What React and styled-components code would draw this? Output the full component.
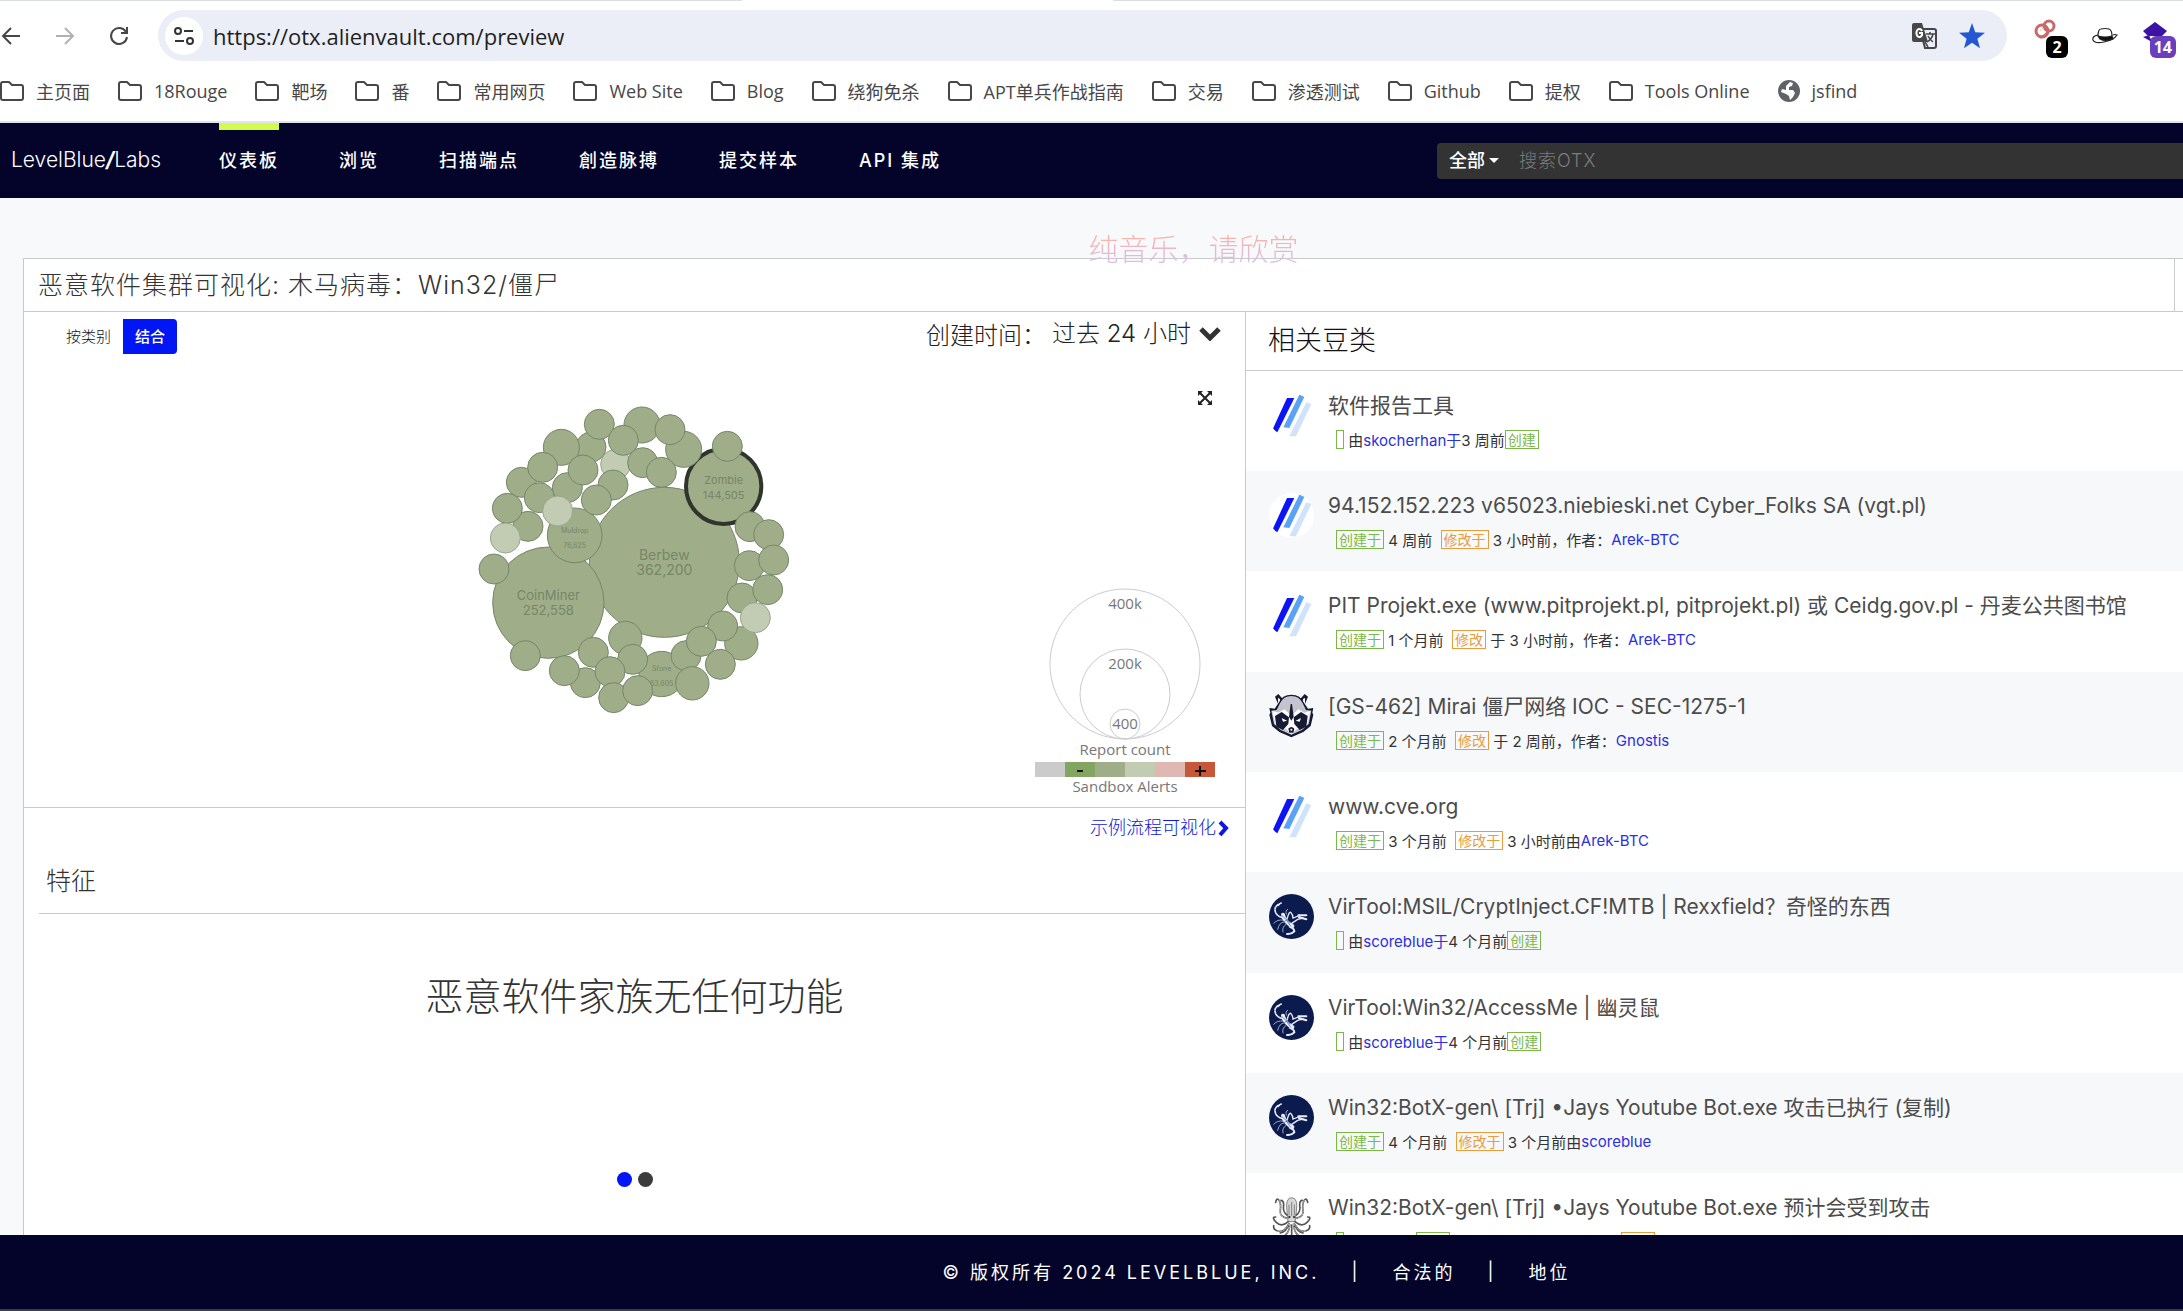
import React from "react";
import styled, { createGlobalStyle, css } from "styled-components";

const ui = `"Open Sans", "Noto Sans CJK SC", sans-serif`;
const site = `Inter, "Noto Sans CJK SC", sans-serif`;
const line = "#c9cacc";

const GlobalStyle = createGlobalStyle`
  *, *::before, *::after { box-sizing: border-box; }
  body { margin: 0; background: #f8f9fb; }
  button, input, select { font: inherit; letter-spacing: inherit; color: inherit; margin: 0; }
  h1, h2, h3, p, ul { margin: 0; padding: 0; font-weight: inherit; }
  ul { list-style: none; }
  a { color: inherit; text-decoration: none; }
`;

const Page = styled.div`
  display: flex;
  flex-direction: column;
  height: 100vh;
  overflow: hidden;
  font-family: ${site};
  font-weight: 300;
  color: #333;
`;

/* ---------- browser chrome ---------- */
const Browser = styled.header`
  flex: none;
  background: #fff;
  border-bottom: 2px solid #dfe4f1;
  font-family: ${ui};
  font-weight: 400;
`;
const TabEdge = styled.div`
  height: 1px;
  background: linear-gradient(to right, #dadde2 34%, #fff 34%, #fff 51%, #dadde2 51%);
`;
const Toolbar = styled.div`
  display: flex;
  align-items: center;
  padding: 9px 7px 0 0;
`;
const IconButton = styled.button`
  display: flex;
  align-items: center;
  justify-content: center;
  border: 0;
  padding: 0;
  background: none;
  color: ${(p) => p.$color || "#474747"};
  svg { display: block; }
`;
const NavButtons = styled.div`
  display: flex;
  gap: 32px;
  width: 158px;
`;
const AddressBar = styled.div`
  display: flex;
  align-items: center;
  flex: 1;
  height: 51px;
  padding: 0 22px 0 7px;
  border-radius: 26px;
  background: #ebeef6;
`;
const SiteInfo = styled(IconButton)`
  width: 38px;
  height: 38px;
  border-radius: 50%;
  background: #fff;
`;
const Url = styled.input`
  flex: 1;
  border: 0;
  outline: 0;
  background: none;
  padding: 0 10px;
  font-size: 22px;
  color: #1f1f1f;
`;
const BarIcons = styled.div`
  display: flex;
  gap: 22px;
`;
const Extensions = styled.div`
  display: flex;
  align-items: center;
  gap: 20px;
  padding-left: 27px;
`;
const Extension = styled(IconButton)`
  position: relative;
  width: 34px;
  height: 44px;
`;
const Badge = styled.span`
  position: absolute;
  right: 0;
  bottom: 0;
  min-width: 22px;
  height: 22px;
  padding: 0 4px;
  border-radius: 6px;
  background: ${(p) => p.$color};
  color: #fff;
  font-size: 16px;
  font-weight: 700;
  line-height: 22px;
`;
const Bookmarks = styled.nav`
  display: flex;
  align-items: center;
  gap: 28px;
  height: 60px;
  white-space: nowrap;
  font-size: 18px;
  color: #474747;
`;
const Bookmark = styled.a`
  display: flex;
  align-items: center;
  gap: 12px;
  svg { display: block; }
`;

/* ---------- site header ---------- */
const SiteBar = styled.div`
  flex: none;
  display: flex;
  align-items: center;
  height: 75px;
  padding-left: 11px;
  background: #04042b;
  color: #fff;
`;
const Brand = styled.a`
  width: 208px;
  padding-bottom: 3px;
  font-size: 21px;
  i { font-weight: 700; }
`;
const Menu = styled.nav`
  display: flex;
  align-self: stretch;
  gap: 60px;
  flex: 1;
  font-size: 18px;
  font-weight: 500;
  letter-spacing: 2px;
`;
const MenuLink = styled.a`
  display: flex;
  align-items: center;
  border-top: 7px solid ${(p) => (p.$active ? "#d3fb4e" : "transparent")};
  border-bottom: 10px solid transparent;
`;
const Search = styled.form`
  display: flex;
  align-items: center;
  width: 746px;
  height: 36px;
  padding-left: 12px;
  border-radius: 4px 0 0 4px;
  background: #333;
  font-size: 18px;
`;
const Scope = styled.select`
  appearance: none;
  border: 0;
  padding: 0;
  background: none;
  color: #fff;
  font-weight: 500;
  option { color: #333; }
`;
const Caret = styled.span`
  margin: 0 18px 0 4px;
  border: 5px solid transparent;
  border-top-color: #fff;
  border-bottom: 0;
`;
const SearchInput = styled.input`
  flex: 1;
  border: 0;
  outline: 0;
  background: none;
  letter-spacing: 1px;
  &::placeholder { color: #7d7d7d; }
`;

/* ---------- main content ---------- */
const Main = styled.main`
  flex: 1;
  min-height: 0;
  display: flex;
  flex-direction: column;
  position: relative;
  padding: 60px 0 0 23px;
  overflow: hidden;
`;
const Lyric = styled.p`
  position: absolute;
  inset: 29px 0 auto 0;
  width: fit-content;
  margin: 0 auto;
  padding-left: 204px;
  font-size: 30px;
  line-height: 44px;
  color: transparent;
  background: linear-gradient(#f8b4a6 20%, #d6bdf0 85%);
  background-clip: text;
`;
const TitleRow = styled.div`
  flex: none;
  display: flex;
  border: 1px solid ${line};
  border-right: 0;
  background: #fff;
`;
const Title = styled.h1`
  flex: 1;
  margin-right: 8px;
  padding: 0 14px;
  border-right: 1px solid ${line};
  font-size: 25px;
  line-height: 52px;
  letter-spacing: 1px;
`;
const Columns = styled.div`
  flex: 1;
  min-height: 0;
  display: grid;
  grid-template-columns: minmax(0, 1222fr) minmax(0, 938fr);
`;
const Left = styled.section`
  border-left: 1px solid ${line};
  background: #fff;
`;
const Viz = styled.div`
  display: grid;
  grid-template-columns: 1fr auto 1fr;
  grid-template-rows: 42px auto;
  height: 496px;
  border-bottom: 1px solid ${line};
`;
const Modes = styled.div`
  grid-column: 1;
  display: flex;
  align-items: center;
  padding: 7px 0 0 30px;
`;
const Mode = styled.button`
  height: 35px;
  border: 0;
  padding: 0 12px 2px;
  border-radius: 0 4px 4px 0;
  font-size: 15px;
  background: ${(p) => (p.$on ? "#0016f5" : "transparent")};
  color: ${(p) => (p.$on ? "#fff" : "#111")};
  font-weight: ${(p) => (p.$on ? 500 : 300)};
`;
const Period = styled.div`
  grid-column: 2 / 4;
  justify-self: end;
  display: flex;
  align-items: center;
  padding-right: 24px;
  font-size: 24px;
  color: #222;
  svg { display: block; margin-left: 8px; }
`;
const PeriodSelect = styled.select`
  appearance: none;
  border: 0;
  padding: 0;
  margin-left: 6px;
  background: none;
`;
const ClusterArea = styled.div`
  grid-column: 2;
  padding-top: 36px;
  svg { display: block; }
`;
const Side = styled.div`
  grid-column: 3;
  display: flex;
  flex-direction: column;
  align-items: flex-end;
  justify-content: space-between;
  padding: 34px 30px 12px 0;
`;
const ExpandButton = styled(IconButton)`
  width: 20px;
  height: 20px;
`;
const FlowRow = styled.div`
  display: flex;
  justify-content: flex-end;
  padding: 1px 16px 0;
`;
const FlowLink = styled.a`
  display: flex;
  align-items: center;
  gap: 2px;
  font-size: 18px;
  line-height: 38px;
  color: #0f16e0;
`;
const FeatureHead = styled.h2`
  margin-left: 15px;
  padding: 18px 7px 15px;
  border-bottom: 1px solid ${line};
  font-size: 25px;
  line-height: 33px;
`;
const Empty = styled.p`
  padding: 55px 0 149px;
  text-align: center;
  font-size: 38px;
  line-height: 54px;
`;
const Dots = styled.div`
  display: flex;
  justify-content: center;
  gap: 6px;
`;
const Dot = styled.button`
  width: 15px;
  height: 15px;
  border: 0;
  padding: 0;
  border-radius: 50%;
  background: ${(p) => (p.$on ? "#0016f5" : "#3c3c3c")};
`;

/* ---------- pulses ---------- */
const Right = styled.section`
  min-height: 0;
  overflow: hidden;
  border-left: 1px solid ${line};
  background: #fff;
`;
const PulseHead = styled.h2`
  padding: 0 22px;
  border-bottom: 1px solid ${line};
  font-size: 27px;
  line-height: 58px;
  color: #111;
`;
const PulseRow = styled.li`
  display: flex;
  gap: 14px;
  padding: 22px 23px 23px;
  white-space: nowrap;
  background: ${(p) => (p.$striped ? "#f7f8fa" : "#fff")};
  &:nth-child(3n) { padding-bottom: 24px; }
`;
const Avatar = styled.span`
  flex: none;
  width: 45px;
  height: 45px;
  border-radius: 50%;
  background: #fff;
  overflow: hidden;
  ${(p) => p.$clear && css`background: none; border-radius: 0;`}
  svg { display: block; width: 100%; height: 100%; }
`;
const PulseTitle = styled.h3`
  font-size: 21px;
  font-weight: 400;
  line-height: 26px;
  color: #4c4c4c;
`;
const Meta = styled.p`
  display: flex;
  align-items: center;
  margin-top: 11px;
  padding-left: 8px;
  height: 18px;
  font-size: 15px;
  font-weight: 400;
`;
const Plain = styled.span`
  white-space: pre;
`;
const User = styled.a`
  color: #2a2fe0;
`;
const Tag = styled.span`
  height: 19px;
  min-width: 8px;
  padding: 0 ${(p) => (p.$empty ? 3 : 2)}px;
  border: 1px solid ${(p) => (p.$warm ? "#e89c3e" : "#7cb849")};
  color: ${(p) => (p.$warm ? "#e89c3e" : "#7cb849")};
  font-size: 14px;
  line-height: 17px;
`;

/* ---------- footer ---------- */
const Footer = styled.footer`
  flex: none;
  display: flex;
  align-items: center;
  justify-content: center;
  gap: 32px;
  height: 76px;
  padding: 0 0 2px 330px;
  border-bottom: 2px solid #3d3c46;
  background: #04042b;
  color: #fff;
  font-size: 18px;
  font-weight: 400;
  letter-spacing: 3px;
`;

/* ---------- icons ---------- */
const Arrow = ({ back }) => (
  <svg width="22" height="22" viewBox="0 0 22 22" fill="none" stroke="currentColor" strokeWidth="2">
    {back ? <path d="M20 11H3M11 3L3 11l8 8" /> : <path d="M2 11h17M11 3l8 8-8 8" />}
  </svg>
);
const Reload = () => (
  <svg width="22" height="22" viewBox="0 0 22 22" fill="none" stroke="currentColor" strokeWidth="2">
    <path d="M18 7a8 8 0 1 0 1 5" />
    <path d="M19 2v6h-6" />
  </svg>
);
const Tune = () => (
  <svg width="22" height="20" viewBox="0 0 22 20" fill="none" stroke="#333" strokeWidth="2">
    <circle cx="5" cy="5" r="3" />
    <path d="M11 5h9M2 15h9" />
    <circle cx="17" cy="15" r="3" />
  </svg>
);
const Folder = () => (
  <svg width="24" height="20" viewBox="0 0 24 20" fill="none" stroke="currentColor" strokeWidth="2" strokeLinejoin="round">
    <path d="M1 3q0-2 2-2h6l3 3h9q2 0 2 2v11q0 2-2 2H3q-2 0-2-2z" />
  </svg>
);
const Globe = () => (
  <svg width="22" height="22" viewBox="0 0 22 22">
    <circle cx="11" cy="11" r="11" fill="#5f6368" />
    <path d="M12 2l3 1-1 3-3 1v3h4l2 3-2 4-3 3-1-4-3-2-5-2 1-3 4 1V6z" fill="#fff" />
  </svg>
);
const Translate = () => (
  <svg width="26" height="26" viewBox="0 0 26 26">
    <path d="M9 6h14q2 0 2 2v15q0 2-2 2h-9z" fill="#ebeef6" stroke="#474747" strokeWidth="2" />
    <path d="M3 0h8l6 19H3q-2 0-2-2V2q0-2 2-2z" fill="#474747" />
    <path d="M11 8a3 4 0 1 0 0 4V10H8" fill="none" stroke="#fff" strokeWidth="2" />
    <path d="M15 11h9M19 9v2M22 11q-1 5-6 8M17 13q2 4 5 6M14 19l3 5" fill="none" stroke="#474747" strokeWidth="1.5" />
  </svg>
);
const Star = () => (
  <svg width="26" height="26" viewBox="0 0 24 24" fill="#2458d3">
    <path d="M12 0l3 8.600 9 .400-7 5.600 2.400 8.700L12 18.300l-7.400 5L7 14.600 0 9l9-.400z" />
  </svg>
);
const Rings = () => (
  <svg width="34" height="44" viewBox="0 0 34 44" fill="none">
    <g stroke="#c8696a" strokeWidth="3">
      <circle cx="8" cy="17" r="6" />
      <circle cx="15" cy="12" r="5" />
      <path d="M6 23q5 0 8-5" />
    </g>
    <path d="M6 17a3 3 0 0 1 4-2" stroke="#eebcbc" />
  </svg>
);
const Hat = () => (
  <svg width="26" height="18" viewBox="0 0 26 18" fill="none" stroke="#222" strokeWidth="1.2">
    <path d="M6 9Q6 2 9 2q4-1 8 0 3 1 3 7" fill="#fff" />
    <path d="M6 9q7 2 14 0l1 3q-8 3-13 0z" fill="#111" />
    <path d="M6 8q-6 1-5 5 2 4 11 2 10-2 13-7-2-1-4 0" />
  </svg>
);
const Gem = () => (
  <svg width="34" height="44" viewBox="0 0 34 44" fill="#3e12a5">
    <path d="M13 8l12 9-5 5H6l-5-5z" />
    <path d="M1 23l6-2 3 7z" />
  </svg>
);
const ChevronDown = () => (
  <svg width="22" height="15" viewBox="0 0 22 15" fill="none" stroke="#333" strokeWidth="5">
    <path d="M2 3l9 9 9-9" />
  </svg>
);
const ChevronRight = () => (
  <svg width="11" height="17" viewBox="0 0 11 17" fill="none" stroke="currentColor" strokeWidth="4">
    <path d="M2 2l6 6-6 7" />
  </svg>
);
const Expand = () => (
  <svg width="14" height="14" viewBox="0 0 14 14">
    <path d="M2 2l10 10M12 2L2 12" stroke="#222" strokeWidth="2" />
    <path d="M0 0h5L0 5zM14 0v5L9 0zM0 14V9l5 5zM14 14H9l5-5z" fill="#222" />
  </svg>
);

const BarsLogo = () => (
  <svg viewBox="0 0 135 135">
    <path d="M54 15h22L25 118 11 109z" fill="#0a14f5" />
    <path d="M91 5l16 5-46 95-18-2z" fill="#5aa2f5" />
    <path d="M112 28l15 5-46 97H61z" fill="#cfe4fb" />
  </svg>
);
const Raccoon = () => (
  <svg viewBox="0 0 135 135">
    <path d="M18 8l10-8 14 16-14 16zM117 8l-10-8-14 16 14 16z" fill="#171a33" />
    <path d="M27 12l5 2 4 12-9 8zM108 12l-5 2-4 12 9 8z" fill="#fff" />
    <path d="M67 2q28 0 38 24l12 18 16-2-3 14 3 6-8 34-22 18-36 16-36-16-22-18-8-34 3-6-3-14 16 2 12-18Q39 2 67 2z" fill="#171a33" />
    <path d="M67 6q24 0 34 22l10 20 16 2-8 40-20 18-32 14-32-14-20-18-8-40 16-2 10-20Q43 6 67 6z" fill="#c3c4cd" />
    <path d="M10 50l18 6 18-10 16 14 5-32 5 32 16-14 18 10 18-6-8 40-20 14-14 2-15 16-15-16-14-2-20-14z" fill="#fff" />
    <path d="M18 66l20-12 22 16-2 20-16 18-20-10zM116 66l-20-12-22 16 2 20 16 18 20-10z" fill="#171a33" />
    <path d="M38 72l16 8-12 3zM96 72l-16 8 12 3z" fill="#fff" />
    <path d="M65 30h4l5 38-7 12-7-12z" fill="#171a33" />
    <path d="M58 104q9-10 18 0l-3 12h-12zM60 122h14l-7 6z" fill="#171a33" />
    <circle cx="67" cy="107" r="3" fill="#fff" />
  </svg>
);
const Scorpion = () => (
  <svg viewBox="0 0 135 135">
    <rect width="135" height="135" fill="#0b1b4d" />
    <g fill="none" stroke="#e9edf8" strokeLinecap="round">
      <path d="M36 28Q12 36 20 56q4 10 22 16" strokeWidth="5" strokeDasharray="6 4" />
      <path d="M28 36l8-10" strokeWidth="3" />
      <path d="M42 62q4 22 28 34" strokeWidth="12" />
      <path d="M54 76q6-26 12-20t6 16l16-6" strokeWidth="4" />
      <path d="M68 88l18-12 16-4" strokeWidth="4" />
      <path d="M88 64l24 0M90 70l22 6" strokeWidth="6" />
      <path d="M62 98q14 6 14 14-10 10-22 8" strokeWidth="6" />
      <path d="M42 78q-18-2-28 10M44 84q-14 2-18 22M50 92q-12 8-8 22M52 60q-4-10 4-14" strokeWidth="2" />
    </g>
    <path d="M38 64l26 24M52 78l14 20M58 74l-14 10" stroke="#4a5c94" strokeWidth="2" />
  </svg>
);
const Octopus = () => (
  <svg viewBox="0 0 135 135" fill="none" stroke="#555" strokeLinecap="round">
    <path d="M54 50q-6-42 14-42t14 42l-4 30H58z" fill="#d8d8d8" strokeWidth="2" />
    <g strokeWidth="5">
      <path d="M56 70Q30 66 34 44q3-18-4-28t-10 6M80 70q26-4 22-26-3-18 4-28t10 6" />
      <path d="M54 60Q40 50 44 30q0-14-8-14M82 60q14-10 10-30 0-14 8-14" />
      <path d="M58 80q-20 18-36 2T20 66M78 80q20 18 36 2t2-16" />
      <path d="M60 86q-14 28-34 22-14-4-12-16M76 86q14 28 34 22 14-4 12-16" />
      <path d="M62 88q0 28-22 38M74 88q0 28 22 38M68 90v40M58 90q-6 20-24 24M78 90q6 20 24 24" />
    </g>
    <g stroke="#eee" strokeWidth="2" strokeDasharray="4 4">
      <path d="M56 70Q30 66 34 44q3-18-4-28M80 70q26-4 22-26-3-18 4-28" />
      <path d="M60 86q-14 28-34 22M76 86q14 28 34 22M62 88q0 28-22 38M74 88q0 28 22 38" />
    </g>
    <path d="M60 30v30M68 22v40M76 30v30" strokeWidth="2" />
    <circle cx="61" cy="66" r="3" fill="#222" />
    <circle cx="75" cy="66" r="3" fill="#222" />
  </svg>
);

/* ---------- charts ---------- */
// [cx, cy, r, light]
const small = [
  [393, 171, 45], [184, 277, 45], [467, 223, 45, 1], [322, 293, 45], [238, 323, 45], [204, 409, 45],
  [304, 172, 54], [546, 105, 54], [671, 178, 54], [248, 232, 45], [418, 103, 45], [369, 240, 45],
  [490, 151, 45], [630, 119, 45], [548, 218, 45], [604, 247, 45], [459, 285, 45], [409, 330, 45],
  [142, 355, 45], [293, 363, 45, 1], [136, 444, 45, 1], [102, 537, 45], [196, 797, 45],
  [802, 169, 45], [870, 410, 45], [926, 434, 45], [868, 527, 45], [941, 510, 45], [846, 624, 45],
  [923, 599, 45], [844, 760, 50], [886, 683, 45, 1], [788, 708, 45], [781, 823, 45], [678, 797, 45],
  [724, 754, 45], [697, 880, 50], [496, 744, 50], [518, 808, 45], [376, 878, 45], [400, 787, 45],
  [450, 845, 45], [313, 842, 45], [461, 923, 45], [533, 902, 45],
];
const named = [
  { x: 613, y: 517, r: 225, label: "Berbew", count: "362,200", size: 42 },
  { x: 265, y: 638, r: 167, label: "CoinMiner", count: "252,558", size: 39 },
  { x: 791, y: 289, r: 113, label: "Zombie", count: "144,505", size: 33, ring: true },
  { x: 344, y: 436, r: 82, label: "Muldrop", count: "76,625", size: 21 },
  { x: 605, y: 852, r: 68, label: "Sfone", count: "63,605", size: 21 },
];
const Cluster = () => (
  <svg width="350" height="340" viewBox="0 0 1050 1020">
    {named.map((b) => (
      <g key={b.label}>
        <circle cx={b.x} cy={b.y} r={b.r} fill="#9fae88" stroke={b.ring ? "#2f342c" : "#75866a"} strokeWidth={b.ring ? 12 : 3} />
        <g fill="#75866a" fontFamily="Inter" fontSize={b.size} fontWeight="400" textAnchor="middle">
          <text x={b.x} y={b.y - 8}>{b.label}</text>
          <text x={b.x} y={b.y + 37}>{b.count}</text>
        </g>
      </g>
    ))}
    {small.map(([x, y, r, light]) => (
      <circle key={`${x}-${y}`} cx={x} cy={y} r={r} fill={light ? "#c2ccb3" : "#9fae88"} stroke={light ? "#98a58d" : "#75866a"} strokeWidth="3" />
    ))}
  </svg>
);
const scale = ["#cbcbcb", "#82a562", "#9fae88", "#c1ccb2", "#dfb8b3", "#c75739"];
const Legend = () => (
  <svg width="180" height="210" viewBox="0 0 180 210" fontFamily="Open Sans" fontSize="15" fontWeight="400" textAnchor="middle">
    <g fill="none" stroke="#ccc">
      <circle cx="90" cy="79" r="75" />
      <circle cx="90" cy="109" r="45" />
      <circle cx="90" cy="139" r="15" />
    </g>
    {scale.map((c, i) => <rect key={c} x={i * 30} y="177" width="30" height="15" fill={c} />)}
    <g fill="#777">
      <text x="90" y="24">400k</text>
      <text x="90" y="84">200k</text>
      <text x="90" y="144">400</text>
      <text x="90" y="170">Report count</text>
      <text x="90" y="207">Sandbox Alerts</text>
    </g>
    <path d="M42 186h6M160 186h11M165 181v10" stroke="#111" strokeWidth="2" />
  </svg>
);

/* ---------- data ---------- */
const bookmarks = ["主页面", "18Rouge", "靶场", "番", "常用网页", "Web Site", "Blog", "绕狗免杀", "APT单兵作战指南", "交易", "渗透测试", "Github", "提权", "Tools Online"];
const menu = ["仪表板", "浏览", "扫描端点", "創造脉搏", "提交样本", "API 集成"];

// Meta parts: g = green tag, o = orange tag, t = text, u = user link
const pulses = [
  { icon: BarsLogo, title: "软件报告工具", meta: [["g", ""], ["t", " 由"], ["u", "skocherhan于"], ["t", "3 周前"], ["g", "创建"]] },
  { icon: BarsLogo, title: "94.152.152.223 v65023.niebieski.net Cyber_Folks SA (vgt.pl)", meta: [["g", "创建于"], ["t", " 4 周前  "], ["o", "修改于"], ["t", " 3 小时前，作者："], ["u", "Arek-BTC"]] },
  { icon: BarsLogo, title: "PIT Projekt.exe (www.pitprojekt.pl, pitprojekt.pl) 或 Ceidg.gov.pl - 丹麦公共图书馆", meta: [["g", "创建于"], ["t", " 1 个月前  "], ["o", "修改"], ["t", " 于 3 小时前，作者："], ["u", "Arek-BTC"]] },
  { icon: Raccoon, clear: true, title: "[GS-462] Mirai 僵尸网络 IOC - SEC-1275-1", meta: [["g", "创建于"], ["t", " 2 个月前  "], ["o", "修改"], ["t", " 于 2 周前，作者："], ["u", "Gnostis"]] },
  { icon: BarsLogo, title: "www.cve.org", meta: [["g", "创建于"], ["t", " 3 个月前  "], ["o", "修改于"], ["t", " 3 小时前由"], ["u", "Arek-BTC"]] },
  { icon: Scorpion, title: "VirTool:MSIL/CryptInject.CF!MTB | Rexxfield？奇怪的东西", meta: [["g", ""], ["t", " 由"], ["u", "scoreblue于"], ["t", "4 个月前"], ["g", "创建"]] },
  { icon: Scorpion, title: "VirTool:Win32/AccessMe | 幽灵鼠", meta: [["g", ""], ["t", " 由"], ["u", "scoreblue于"], ["t", "4 个月前"], ["g", "创建"]] },
  { icon: Scorpion, title: "Win32:BotX-gen\\ [Trj] •Jays Youtube Bot.exe 攻击已执行 (复制)", meta: [["g", "创建于"], ["t", " 4 个月前  "], ["o", "修改于"], ["t", " 3 个月前由"], ["u", "scoreblue"]] },
  { icon: Octopus, clear: true, title: "Win32:BotX-gen\\ [Trj] •Jays Youtube Bot.exe 预计会受到攻击", meta: [["g", ""], ["t", "  4 个月前 "], ["g", "创建"], ["t", " 由"], ["u", "scoreblue"], ["t", "于 4 个月前 "], ["o", "修改"]] },
];

const MetaPart = ({ kind, text }) => {
  if (kind === "g" || kind === "o") return <Tag $warm={kind === "o"} $empty={!text}>{text}</Tag>;
  if (kind === "u") return <User href="#user">{text}</User>;
  return <Plain>{text}</Plain>;
};

export default function App() {
  return (
    <Page>
      <GlobalStyle />
      <Browser>
        <TabEdge />
        <Toolbar>
          <NavButtons>
            <IconButton aria-label="Back"><Arrow back /></IconButton>
            <IconButton aria-label="Forward" $color="#b0b0b0"><Arrow /></IconButton>
            <IconButton aria-label="Reload"><Reload /></IconButton>
          </NavButtons>
          <AddressBar>
            <SiteInfo aria-label="Site information"><Tune /></SiteInfo>
            <Url aria-label="Address" defaultValue="https://otx.alienvault.com/preview" />
            <BarIcons>
              <IconButton aria-label="Translate"><Translate /></IconButton>
              <IconButton aria-label="Bookmark"><Star /></IconButton>
            </BarIcons>
          </AddressBar>
          <Extensions>
            <Extension aria-label="Rings extension"><Rings /><Badge $color="#000">2</Badge></Extension>
            <Extension aria-label="Hat extension"><Hat /></Extension>
            <Extension aria-label="Gem extension"><Gem /><Badge $color="#6a3fbd">14</Badge></Extension>
          </Extensions>
        </Toolbar>
        <Bookmarks>
          {bookmarks.map((b) => <Bookmark key={b} href="#bookmark"><Folder />{b}</Bookmark>)}
          <Bookmark href="#bookmark"><Globe />jsfind</Bookmark>
        </Bookmarks>
      </Browser>

      <SiteBar>
        <Brand href="#home">LevelBlue<i>/</i>Labs</Brand>
        <Menu>
          {menu.map((m, i) => <MenuLink key={m} href="#menu" $active={i === 0}>{m}</MenuLink>)}
        </Menu>
        <Search>
          <Scope aria-label="搜索范围"><option>全部</option></Scope>
          <Caret />
          <SearchInput aria-label="搜索" placeholder="搜索OTX" />
        </Search>
      </SiteBar>

      <Main>
        <TitleRow>
          <Title>恶意软件集群可视化: 木马病毒：Win32/僵尸</Title>
        </TitleRow>
        <Lyric>纯音乐，请欣赏</Lyric>
        <Columns>
          <Left>
            <Viz>
              <Modes>
                <Mode>按类别</Mode>
                <Mode $on>结合</Mode>
              </Modes>
              <Period>
                <label htmlFor="period">创建时间：</label>
                <PeriodSelect id="period"><option>过去 24 小时</option></PeriodSelect>
                <ChevronDown />
              </Period>
              <ClusterArea><Cluster /></ClusterArea>
              <Side>
                <ExpandButton aria-label="Expand"><Expand /></ExpandButton>
                <Legend />
              </Side>
            </Viz>
            <FlowRow><FlowLink href="#flow">示例流程可视化<ChevronRight /></FlowLink></FlowRow>
            <FeatureHead>特征</FeatureHead>
            <Empty>恶意软件家族无任何功能</Empty>
            <Dots>
              <Dot aria-label="1" $on />
              <Dot aria-label="2" />
            </Dots>
          </Left>
          <Right>
            <PulseHead>相关豆类</PulseHead>
            <ul>
              {pulses.map((p, i) => (
                <PulseRow key={p.title} $striped={i % 2 === 1}>
                  <Avatar $clear={p.clear}><p.icon /></Avatar>
                  <div>
                    <PulseTitle>{p.title}</PulseTitle>
                    <Meta>{p.meta.map(([kind, text], n) => <MetaPart key={n} kind={kind} text={text} />)}</Meta>
                  </div>
                </PulseRow>
              ))}
            </ul>
          </Right>
        </Columns>
      </Main>

      <Footer>
        <span>© 版权所有 2024 LEVELBLUE, INC.</span>
        <span>|</span>
        <a href="#legal">合法的</a>
        <span>|</span>
        <a href="#status">地位</a>
      </Footer>
    </Page>
  );
}
